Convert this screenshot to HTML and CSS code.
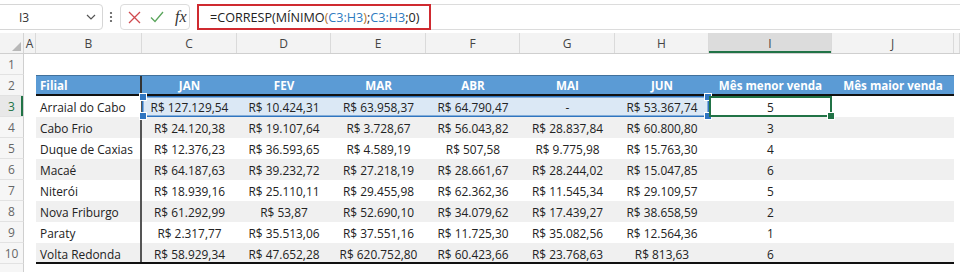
FILE: index.html
```html
<!DOCTYPE html>
<html lang="pt-BR">
<head>
  <meta charset="UTF-8">
  <title>CORRESP MÍNIMO</title>
  <link rel="stylesheet" href="styles.css">
</head>
<body>
<div class="app">
  <div class="formula-bar">
    <div class="name-box">
      <span class="cell-ref">I3</span>
      <svg class="chevron" width="10" height="6" viewBox="0 0 10 6"><path d="M1 1 L5 5 L9 1" fill="none" stroke="#555" stroke-width="1.2"/></svg>
    </div>
    <svg class="grip" width="4" height="12" viewBox="0 0 4 12"><circle cx="2" cy="2" r="1.1" fill="#555"/><circle cx="2" cy="6" r="1.1" fill="#555"/><circle cx="2" cy="10" r="1.1" fill="#555"/></svg>
    <div class="fx-tools">
      <svg width="13" height="13" viewBox="0 0 13 13"><path d="M1 1 L12 12 M12 1 L1 12" stroke="#d04a4f" stroke-width="1.3" fill="none"/></svg>
      <svg width="14" height="12" viewBox="0 0 14 12"><path d="M1 6.5 L5 10.5 L13 1" stroke="#5aa55c" stroke-width="1.3" fill="none"/></svg>
      <span class="fx">fx</span>
    </div>
    <div class="formula-input">
      <div class="formula-edit">=CORRESP(MÍNIMO<span class="paren">(</span><span class="ref">C3:H3</span><span class="paren">)</span>;<span class="ref">C3:H3</span>;0)</div>
    </div>
  </div>

  <div class="sheet">
    <div class="row head-row">
      <span class="corner"><i class="select-all"></i></span>
      <span class="ch">A</span><span class="ch">B</span><span class="ch">C</span><span class="ch">D</span><span class="ch">E</span>
      <span class="ch">F</span><span class="ch">G</span><span class="ch">H</span><span class="ch active">I</span><span class="ch">J</span><span class="ch"></span>
    </div>

    <div class="row">
      <span class="rh">1</span>
      <span></span><span></span><span></span><span></span><span></span><span></span><span></span><span></span><span></span><span></span><span></span>
    </div>

    <div class="row table-head">
      <span class="rh">2</span>
      <span></span>
      <span class="c name">Filial</span>
      <span class="c">JAN</span><span class="c">FEV</span><span class="c">MAR</span><span class="c">ABR</span><span class="c">MAI</span><span class="c">JUN</span>
      <span class="c">Mês menor venda</span><span class="c">Mês maior venda</span>
      <span></span>
    </div>

    <div class="row current">
      <span class="rh active">3</span>
      <span></span>
      <span class="c name">Arraial do Cabo</span>
      <span class="c pick first">R$ 127.129,54</span><span class="c pick">R$ 10.424,31</span><span class="c pick">R$ 63.958,37</span>
      <span class="c pick">R$ 64.790,47</span><span class="c pick">-</span><span class="c pick last">R$ 53.367,74</span>
      <span class="c result">5</span><span class="c"></span>
      <span></span>
    </div>

    <div class="row band">
      <span class="rh">4</span>
      <span></span>
      <span class="c name">Cabo Frio</span>
      <span class="c">R$ 24.120,38</span><span class="c">R$ 19.107,64</span><span class="c">R$ 3.728,67</span>
      <span class="c">R$ 56.043,82</span><span class="c">R$ 28.837,84</span><span class="c">R$ 60.800,80</span>
      <span class="c">3</span><span class="c"></span>
      <span></span>
    </div>

    <div class="row">
      <span class="rh">5</span>
      <span></span>
      <span class="c name">Duque de Caxias</span>
      <span class="c">R$ 12.376,23</span><span class="c">R$ 36.593,65</span><span class="c">R$ 4.589,19</span>
      <span class="c">R$ 507,58</span><span class="c">R$ 9.775,98</span><span class="c">R$ 15.763,30</span>
      <span class="c">4</span><span class="c"></span>
      <span></span>
    </div>

    <div class="row band">
      <span class="rh">6</span>
      <span></span>
      <span class="c name">Macaé</span>
      <span class="c">R$ 64.187,63</span><span class="c">R$ 39.232,72</span><span class="c">R$ 27.218,19</span>
      <span class="c">R$ 28.661,67</span><span class="c">R$ 28.244,02</span><span class="c">R$ 15.047,85</span>
      <span class="c">6</span><span class="c"></span>
      <span></span>
    </div>

    <div class="row">
      <span class="rh">7</span>
      <span></span>
      <span class="c name">Niterói</span>
      <span class="c">R$ 18.939,16</span><span class="c">R$ 25.110,11</span><span class="c">R$ 29.455,98</span>
      <span class="c">R$ 62.362,36</span><span class="c">R$ 11.545,34</span><span class="c">R$ 29.109,57</span>
      <span class="c">5</span><span class="c"></span>
      <span></span>
    </div>

    <div class="row band">
      <span class="rh">8</span>
      <span></span>
      <span class="c name">Nova Friburgo</span>
      <span class="c">R$ 61.292,99</span><span class="c">R$ 53,87</span><span class="c">R$ 52.690,10</span>
      <span class="c">R$ 34.079,62</span><span class="c">R$ 17.439,27</span><span class="c">R$ 38.658,59</span>
      <span class="c">2</span><span class="c"></span>
      <span></span>
    </div>

    <div class="row">
      <span class="rh">9</span>
      <span></span>
      <span class="c name">Paraty</span>
      <span class="c">R$ 2.317,77</span><span class="c">R$ 35.513,06</span><span class="c">R$ 37.551,16</span>
      <span class="c">R$ 11.725,30</span><span class="c">R$ 35.082,56</span><span class="c">R$ 12.564,36</span>
      <span class="c">1</span><span class="c"></span>
      <span></span>
    </div>

    <div class="row band last-row">
      <span class="rh">10</span>
      <span></span>
      <span class="c name">Volta Redonda</span>
      <span class="c">R$ 58.929,34</span><span class="c">R$ 47.652,28</span><span class="c">R$ 620.752,80</span>
      <span class="c">R$ 60.423,66</span><span class="c">R$ 23.768,63</span><span class="c">R$ 813,63</span>
      <span class="c">6</span><span class="c"></span>
      <span></span>
    </div>

    <div class="row">
      <span class="rh"></span>
      <span></span><span></span><span></span><span></span><span></span><span></span><span></span><span></span><span></span><span></span><span></span>
    </div>
  </div>
</div>
</body>
</html>
```

FILE: styles.css
```css
* {
  margin: 0;
  padding: 0;
  box-sizing: border-box;
}

body {
  font-family: 'Open Sans', sans-serif;
  background: #ffffff;
  color: #222;
  width: 960px;
  height: 272px;
  overflow: hidden;
}

/* formula bar */

.formula-bar {
  height: 33px;
  display: flex;
  align-items: center;
  background: #fff;
  padding-top: 1px;
}

.name-box {
  width: 107px;
  height: 26px;
  margin-left: -4px;
  border: 1px solid #d6d6d6;
  border-radius: 4px;
  display: flex;
  align-items: center;
  justify-content: space-between;
  padding: 0 6px 0 22px;
}

.cell-ref {
  font-size: 12px;
  color: #333;
}

.grip {
  margin: 0 7px 0 6px;
}

.fx-tools {
  width: 70px;
  height: 26px;
  border: 1px solid #dcdcdc;
  border-radius: 4px;
  display: flex;
  align-items: center;
  gap: 9px;
  padding-left: 7px;
}

.fx {
  font-family: 'Liberation Serif', serif;
  font-style: italic;
  font-size: 16px;
  color: #333;
  margin-left: 2px;
}

.formula-input {
  flex: 1;
  height: 26px;
  margin-left: 7px;
  border-top: 1px solid #dcdcdc;
  border-bottom: 1px solid #dcdcdc;
  display: flex;
  align-items: stretch;
}

.formula-edit {
  width: 234px;
  margin-top: -1px;
  margin-bottom: -1px;
  border: 2px solid #cf2a30;
  font-size: 12.6px;
  color: #222;
  padding-left: 11px;
  display: flex;
  align-items: center;
  white-space: pre;
}

.formula-edit .ref {
  color: #2f7bc0;
}

.formula-edit .paren {
  color: #b5722d;
}

/* sheet grid */

.row {
  display: grid;
  grid-template-columns: 24px 12px 106px 95px 94px 95px 94px 95px 94px 123px 122px 1fr;
  height: 21px;
  font-size: 11.9px;
}

.head-row {
  height: 21px;
  background: #f3f3f3;
  border-bottom: 1px solid #cfcfcf;
}

.corner {
  position: relative;
  background: #f3f3f3;
  border-right: 1px solid #d4d4d4;
}

.select-all {
  position: absolute;
  right: 2px;
  bottom: 2px;
  width: 0;
  height: 0;
  border-left: 9px solid transparent;
  border-bottom: 9px solid #b8b8b8;
}

.ch {
  display: flex;
  align-items: center;
  justify-content: center;
  color: #444;
  font-size: 12px;
  border-right: 1px solid #dadada;
}

.ch.active {
  background: #dcdcdc;
  box-shadow: inset 0 -2px 0 #217346;
}

.rh {
  display: flex;
  align-items: center;
  justify-content: center;
  color: #666;
  font-size: 12px;
  background: #f6f6f6;
  border-right: 1px solid #cfcfcf;
  border-bottom: 1px solid #e2e2e2;
}

.rh.active {
  color: #217346;
  background: #e8e8e8;
  box-shadow: inset -2px 0 0 #217346;
}

.c {
  display: flex;
  align-items: center;
  justify-content: center;
  white-space: nowrap;
  color: #222;
}

.c.name {
  justify-content: flex-start;
  padding-left: 4px;
  box-shadow: inset -2px 0 0 #555;
}

.band .c {
  background: #f0f0f0;
}

/* table header */

.table-head .c {
  background: #5b9bd5;
  color: #fff;
  font-weight: bold;
  font-size: 11.6px;
  box-shadow: inset 0 1px 0 #41719c, inset 0 -2px 0 #111;
}

.table-head .c.name {
  box-shadow: inset 0 1px 0 #41719c, inset 0 -2px 0 #111, inset -2px 0 0 #333;
}

.last-row .c {
  box-shadow: inset 0 -2px 0 #111;
}

.last-row .c.name {
  box-shadow: inset 0 -2px 0 #111, inset -2px 0 0 #555;
}

/* selection: range C3:H3 and active cell I3 */

.current .c.name {
  box-shadow: inset -1px 0 0 #555;
}

.c.pick {
  position: relative;
  background: #dbe8f5;
  box-shadow: inset 0 1.5px 0 #2f75c0, inset 0 -1.5px 0 #2f75c0;
}

.c.pick.first {
  box-shadow: inset 0 1.5px 0 #2f75c0, inset 0 -1.5px 0 #2f75c0, inset 1.5px 0 0 #2f75c0;
}

.c.pick.last {
  box-shadow: inset 0 1.5px 0 #2f75c0, inset 0 -1.5px 0 #2f75c0, inset -1.5px 0 0 #2f75c0;
}

.c.pick.first::before,
.c.pick.first::after,
.c.pick.last::before,
.c.pick.last::after {
  content: '';
  position: absolute;
  width: 6px;
  height: 6px;
  background: #2f75c0;
  border: 1px solid #fff;
}

.c.pick.first::before { left: -3px; top: -3px; }
.c.pick.first::after { left: -3px; bottom: -3px; }
.c.pick.last::before { right: -3px; top: -3px; }
.c.pick.last::after { right: -3px; bottom: -3px; }

.c.result {
  position: relative;
  background: #fff;
  box-shadow: inset 0 0 0 2px #217346;
}

.c.result::after {
  content: '';
  position: absolute;
  right: -3px;
  bottom: -3px;
  width: 6px;
  height: 6px;
  background: #217346;
  border: 1px solid #fff;
}
```
